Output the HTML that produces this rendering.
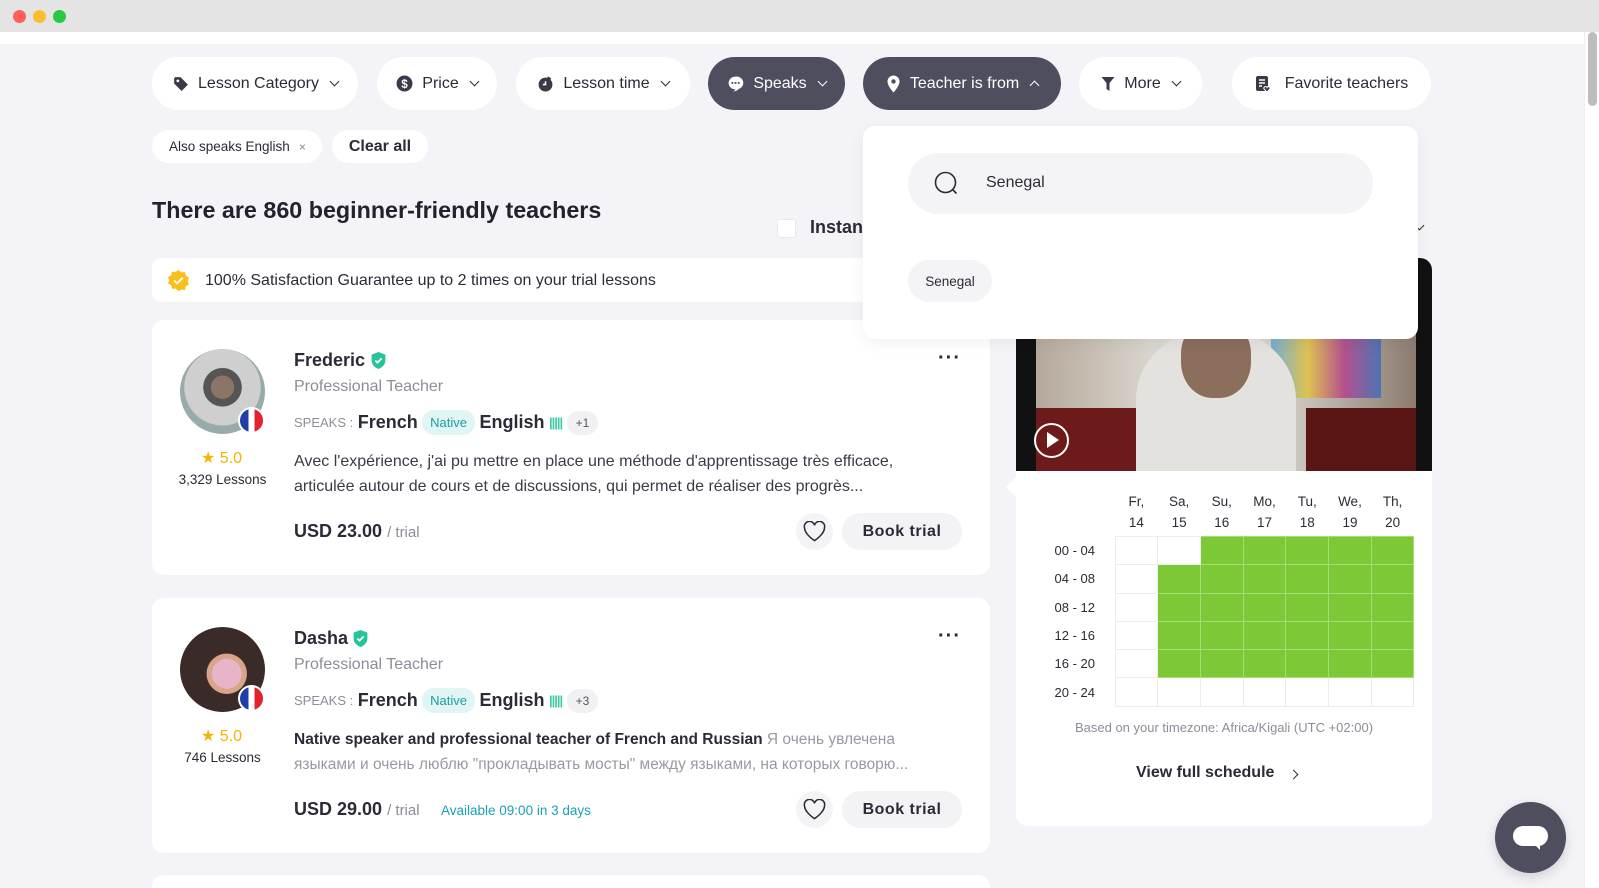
<!DOCTYPE html>
<html style="width:1599px;height:888px;overflow:hidden"><head><meta charset="utf-8"><style>
*{box-sizing:border-box;margin:0;padding:0}
body{width:1599px;height:888px;overflow:hidden;background:#f4f4f8;font-family:"Liberation Sans",Arial,sans-serif;color:#2b2b38;position:relative}
.a{position:absolute}
.pill{position:absolute;top:57px;height:53px;border-radius:27px;background:#fff;display:flex;align-items:center;justify-content:center;gap:9px;font-size:16px;color:#2b2b38}
.pill.dark{background:#4f4e5f;color:#fff}
.chev{width:7px;height:7px;border-right:1.7px solid currentColor;border-bottom:1.7px solid currentColor;transform:rotate(45deg);margin-top:-4px;margin-left:3px}
.chev.up{transform:rotate(-135deg);margin-top:4px}
.card{position:absolute;left:152px;width:838px;height:255px;background:#fff;border-radius:12px}
.name{font-size:18px;font-weight:bold}
.sub{font-size:16px;color:#8e8c99}
.gray{color:#8e8c99}
.badge{display:inline-block;background:#e1f6f4;color:#1a9fa0;font-size:13px;padding:5px 8px;border-radius:12px;vertical-align:middle}
.plus{display:inline-block;background:#f1f1f4;font-size:12px;padding:5px 9px;border-radius:12px;vertical-align:middle;color:#555}
.bars{display:inline-block;vertical-align:middle;color:#3fc9a5;font-size:13px;letter-spacing:-1px;font-weight:bold}
.book{position:absolute;width:120px;height:37px;border-radius:19px;background:#f3f3f6;font-weight:bold;font-size:16px;display:flex;align-items:center;justify-content:center;letter-spacing:.5px}
.grid td{border:1px solid #ececef;width:42.7px;height:28.3px;padding:0}
.grid td.g{background:#7dc837;border-color:#a6dc74}
.grid td.l{width:80px;font-size:13px;text-align:center;border-left:0;border-top:0;border-bottom:0}
</style></head><body>
<div class="a" style="left:0;top:0;width:1599px;height:32px;background:#e4e4e4"></div>
<div class="a" style="left:13px;top:10px;width:13px;height:13px;border-radius:50%;background:#fe5f57"></div>
<div class="a" style="left:33px;top:10px;width:13px;height:13px;border-radius:50%;background:#febc2e"></div>
<div class="a" style="left:53px;top:10px;width:13px;height:13px;border-radius:50%;background:#28c840"></div>
<div class="a" style="left:0;top:32px;width:1584px;height:12px;background:#fff"></div>
<div class="a" style="left:1584px;top:32px;width:15px;height:856px;background:#fff;border-left:1px solid #eee"></div>
<div class="a" style="left:1588px;top:32px;width:9px;height:74px;border-radius:5px;background:#bdbdbd"></div>

<div class="pill" style="left:152px;width:206px"><svg width="17" height="17" viewBox="0 0 16 16"><path d="M2 3v5l7 7 6-6-7-7H3z" fill="#3a3a48"/><circle cx="5.5" cy="5.5" r="1.3" fill="#fff"/></svg>Lesson Category<span class="chev"></span></div>
<div class="pill" style="left:377px;width:120px"><svg width="17" height="17" viewBox="0 0 16 16"><circle cx="8" cy="8" r="7.5" fill="#3a3a48"/><text x="8" y="12" font-size="11" fill="#fff" text-anchor="middle" font-family="Liberation Sans" font-weight="bold">$</text></svg>Price<span class="chev"></span></div>
<div class="pill" style="left:516px;width:174px"><svg width="17" height="17" viewBox="0 0 16 16"><circle cx="8" cy="9" r="6.5" fill="#3a3a48"/><path d="M10 2l3 2" stroke="#3a3a48" stroke-width="1.6"/><path d="M8 6v3H5.5" stroke="#fff" stroke-width="1.5" fill="none"/></svg>Lesson time<span class="chev"></span></div>
<div class="pill dark" style="left:708px;width:137px"><svg width="17" height="17" viewBox="0 0 16 16"><path d="M8 1.5a6.5 6 0 1 0 0 12c-.5 1 -1.5 1.7-2.5 2 2.5 0 4.5-1 5.5-2.4A6.5 6 0 0 0 8 1.5z" fill="#fff"/><circle cx="5" cy="7.5" r="1" fill="#4f4e5f"/><circle cx="8" cy="7.5" r="1" fill="#4f4e5f"/><circle cx="11" cy="7.5" r="1" fill="#4f4e5f"/></svg>Speaks<span class="chev"></span></div>
<div class="pill dark" style="left:863px;width:198px"><svg width="15" height="18" viewBox="0 0 14 18"><path d="M7 0.5a6 6 0 0 0-6 6c0 4.5 6 11 6 11s6-6.5 6-11a6 6 0 0 0-6-6z" fill="#fff"/><circle cx="7" cy="6.5" r="2.2" fill="#4f4e5f"/></svg>Teacher is from<span class="chev up"></span></div>
<div class="pill" style="left:1079px;width:123px"><svg width="14" height="16" viewBox="0 0 14 16"><path d="M0.5 1h13L8.5 7v8l-3-2V7z" fill="#3a3a48"/></svg>More<span class="chev"></span></div>
<div class="pill" style="left:1232px;width:199px;gap:14px"><svg width="16" height="18" viewBox="0 0 16 18"><rect x="1" y="1" width="12" height="15" rx="2" fill="#3a3a48"/><path d="M4 5h6M4 8h6M4 11h3" stroke="#fff" stroke-width="1.4"/><path d="M12 17l-3-3a1.6 1.6 0 0 1 3-1.5a1.6 1.6 0 0 1 3 1.5z" fill="#3a3a48" stroke="#fff" stroke-width="1"/></svg>Favorite teachers</div>

<div class="a" style="left:152px;top:130px;width:170px;height:33px;border-radius:17px;background:#fff;font-size:13.5px;display:flex;align-items:center;padding-left:17px;color:#2b2b38">Also speaks English <span style="color:#888;margin-left:9px;font-size:12px">×</span></div>
<div class="a" style="left:332px;top:130px;width:96px;height:33px;border-radius:17px;background:#fff;font-size:16px;font-weight:bold;display:flex;align-items:center;justify-content:center">Clear all</div>

<div class="a" style="left:152px;top:197px;font-size:23.3px;font-weight:bold;color:#22222e">There are 860 beginner-friendly teachers</div>
<div class="a" style="left:777px;top:219px;width:19px;height:19px;border-radius:3px;background:#fff;border:1px solid #e8e8ee"></div>
<div class="a" style="left:810px;top:217px;font-size:18px;font-weight:bold">Instant</div>
<div class="a" style="left:1416px;top:222px;width:7px;height:7px;border-right:1.5px solid #333;border-bottom:1.5px solid #333;transform:rotate(45deg)"></div>

<div class="a" style="left:152px;top:258px;width:850px;height:44px;background:#fff;border-radius:10px"></div>
<svg class="a" style="left:167px;top:269px" width="23" height="23" viewBox="0 0 24 24"><path d="M12 1l3 2.5 3.8-.3.8 3.8 3.4 2-1.5 3.5 1.5 3.5-3.4 2-.8 3.8-3.8-.3L12 23l-3-2.5-3.8.3-.8-3.8-3.4-2L2.5 12 1 8.5l3.4-2 .8-3.8 3.8.3z" fill="#fbbf1a"/><path d="M7.5 12l3 3 6-6" stroke="#fff" stroke-width="2" fill="none"/></svg>
<div class="a" style="left:205px;top:272px;font-size:16px">100% Satisfaction Guarantee up to 2 times on your trial lessons</div>

<div class="card" style="top:320px"></div>
<div class="a" style="left:180px;top:349px;width:85px;height:85px;border-radius:50%;background:radial-gradient(circle at 50% 45%,#8a7566 0 18%,#555 19% 30%,#cfcfcf 31% 60%,#9aa 61%)"></div>
<div class="a" style="left:238px;top:407px;width:27px;height:27px;border-radius:50%;border:2px solid #fff;background:linear-gradient(90deg,#1f3ea8 0 36%,#fff 36% 64%,#e4222f 64%)"></div>
<div class="a" style="left:201px;top:448px;font-size:16px;color:#f5b400">★ <span>5.0</span></div>
<div class="a" style="left:178px;top:472px;width:89px;text-align:center;font-size:13.5px">3,329 Lessons</div>
<div class="a name" style="left:294px;top:350px">Frederic</div>
<svg class="a" style="left:371px;top:352px" width="15" height="17" viewBox="0 0 14 16"><path d="M7 0l6.5 2.5V8c0 4-3 6.5-6.5 8C3.5 14.5.5 12 .5 8V2.5z" fill="#27c49a"/><path d="M4 8l2 2 4-4" stroke="#fff" stroke-width="1.6" fill="none"/></svg>
<div class="a sub" style="left:294px;top:378px">Professional Teacher</div>
<div class="a" style="left:294px;top:410px;white-space:nowrap"><span class="gray" style="font-size:13px;vertical-align:middle">SPEAKS :</span> <span style="font-size:18px;font-weight:bold;vertical-align:middle">French</span> <span class="badge">Native</span> <span style="font-size:18px;font-weight:bold;vertical-align:middle">English</span> <span class="bars">|||||</span> <span class="plus">+1</span></div>
<div class="a" style="left:294px;top:449px;width:690px;font-size:16px;line-height:25px;color:#3a3a48;white-space:nowrap">Avec l'expérience, j'ai pu mettre en place une méthode d'apprentissage très efficace,<br>articulée autour de cours et de discussions, qui permet de réaliser des progrès...</div>
<div class="a" style="left:294px;top:521px;font-size:18px;font-weight:bold">USD 23.00 <span style="font-weight:normal;font-size:15px;color:#8e8c99">/ trial</span></div>
<div class="a" style="left:796px;top:513px;width:37px;height:37px;border-radius:50%;background:#f4f4f7"></div>
<svg class="a" style="left:803px;top:521px" width="23" height="21" viewBox="0 0 24 22"><path d="M12 20.5S1.5 14 1.5 7A5.2 5.2 0 0 1 12 4.5 5.2 5.2 0 0 1 22.5 7c0 7-10.5 13.5-10.5 13.5z" fill="none" stroke="#2b2b38" stroke-width="1.6"/></svg>
<div class="book" style="left:842px;top:513px">Book trial</div>
<div class="a" style="left:938px;top:347px;font-size:20px;font-weight:bold;letter-spacing:1px">···</div>

<div class="card" style="top:598px"></div>
<div class="a" style="left:180px;top:627px;width:85px;height:85px;border-radius:50%;background:radial-gradient(ellipse at 55% 55%,#e8b4c8 0 22%,#d9a58a 23% 30%,#3a2a28 31%)"></div>
<div class="a" style="left:238px;top:685px;width:27px;height:27px;border-radius:50%;border:2px solid #fff;background:linear-gradient(90deg,#1f3ea8 0 36%,#fff 36% 64%,#e4222f 64%)"></div>
<div class="a" style="left:201px;top:726px;font-size:16px;color:#f5b400">★ <span>5.0</span></div>
<div class="a" style="left:178px;top:750px;width:89px;text-align:center;font-size:13.5px">746 Lessons</div>
<div class="a name" style="left:294px;top:628px">Dasha</div>
<svg class="a" style="left:353px;top:630px" width="15" height="17" viewBox="0 0 14 16"><path d="M7 0l6.5 2.5V8c0 4-3 6.5-6.5 8C3.5 14.5.5 12 .5 8V2.5z" fill="#27c49a"/><path d="M4 8l2 2 4-4" stroke="#fff" stroke-width="1.6" fill="none"/></svg>
<div class="a sub" style="left:294px;top:656px">Professional Teacher</div>
<div class="a" style="left:294px;top:688px;white-space:nowrap"><span class="gray" style="font-size:13px;vertical-align:middle">SPEAKS :</span> <span style="font-size:18px;font-weight:bold;vertical-align:middle">French</span> <span class="badge">Native</span> <span style="font-size:18px;font-weight:bold;vertical-align:middle">English</span> <span class="bars">|||||</span> <span class="plus">+3</span></div>
<div class="a" style="left:294px;top:727px;width:690px;font-size:15.5px;line-height:25px;color:#9a98a4;white-space:nowrap;overflow:hidden"><b style="color:#2b2b38">Native speaker and professional teacher of French and Russian</b> Я очень увлечена<br>языками и очень люблю "прокладывать мосты" между языками, на которых говорю...</div>
<div class="a" style="left:294px;top:799px;font-size:18px;font-weight:bold">USD 29.00 <span style="font-weight:normal;font-size:15px;color:#8e8c99">/ trial</span></div>
<div class="a" style="left:441px;top:803px;font-size:13.5px;color:#1aa0b5">Available 09:00 in 3 days</div>
<div class="a" style="left:796px;top:791px;width:37px;height:37px;border-radius:50%;background:#f4f4f7"></div>
<svg class="a" style="left:803px;top:799px" width="23" height="21" viewBox="0 0 24 22"><path d="M12 20.5S1.5 14 1.5 7A5.2 5.2 0 0 1 12 4.5 5.2 5.2 0 0 1 22.5 7c0 7-10.5 13.5-10.5 13.5z" fill="none" stroke="#2b2b38" stroke-width="1.6"/></svg>
<div class="book" style="left:842px;top:791px">Book trial</div>
<div class="a" style="left:938px;top:625px;font-size:20px;font-weight:bold;letter-spacing:1px">···</div>

<div class="card" style="top:875px;height:13px;border-radius:12px 12px 0 0"></div>

<div class="a" style="left:1016px;top:258px;width:416px;height:568px;background:#fff;border-radius:12px"></div>
<div class="a" style="left:1016px;top:258px;width:416px;height:213px;background:#111;border-radius:12px 12px 0 0;overflow:hidden">
 <div class="a" style="left:20px;top:60px;width:380px;height:153px;background:linear-gradient(90deg,#b4a89a 0,#d9d5cc 30%,#e6e3de 50%,#c9c4bb 70%,#8d7b6f 100%)"></div>
 <div class="a" style="left:20px;top:150px;width:100px;height:63px;background:#6d1a1a"></div>
 <div class="a" style="left:290px;top:150px;width:110px;height:63px;background:#5a1515"></div>
 <div class="a" style="left:255px;top:80px;width:110px;height:60px;background:linear-gradient(90deg,#5aa6d8,#e6c23a,#b43b8a,#3a6cc0);opacity:.8"></div>
 <div class="a" style="left:120px;top:70px;width:160px;height:143px;border-radius:50% 50% 0 0;background:#e4e2de"></div>
 <div class="a" style="left:165px;top:60px;width:70px;height:80px;border-radius:45%;background:#8b6e5c"></div>
</div>
<div class="a" style="left:1034px;top:423px;width:35px;height:35px;border-radius:50%;border:2.5px solid #fff"></div>
<div class="a" style="left:1047px;top:432px;width:0;height:0;border-left:12px solid #fff;border-top:8px solid transparent;border-bottom:8px solid transparent"></div>
<div class="a" style="left:1006px;top:477px;width:0;height:0;border-right:10px solid #fff;border-top:10px solid transparent;border-bottom:10px solid transparent"></div>

<div class="a" style="left:1115px;top:491px;width:299px;display:flex;font-size:13.5px;text-align:center;line-height:21px">
<div style="flex:1">Fr,<br>14</div><div style="flex:1">Sa,<br>15</div><div style="flex:1">Su,<br>16</div><div style="flex:1">Mo,<br>17</div><div style="flex:1">Tu,<br>18</div><div style="flex:1">We,<br>19</div><div style="flex:1">Th,<br>20</div></div>
<table class="a grid" style="left:1035px;top:536px;border-collapse:collapse">
<tr><td class="l">00 - 04</td><td></td><td></td><td class="g"></td><td class="g"></td><td class="g"></td><td class="g"></td><td class="g"></td></tr>
<tr><td class="l">04 - 08</td><td></td><td class="g"></td><td class="g"></td><td class="g"></td><td class="g"></td><td class="g"></td><td class="g"></td></tr>
<tr><td class="l">08 - 12</td><td></td><td class="g"></td><td class="g"></td><td class="g"></td><td class="g"></td><td class="g"></td><td class="g"></td></tr>
<tr><td class="l">12 - 16</td><td></td><td class="g"></td><td class="g"></td><td class="g"></td><td class="g"></td><td class="g"></td><td class="g"></td></tr>
<tr><td class="l">16 - 20</td><td></td><td class="g"></td><td class="g"></td><td class="g"></td><td class="g"></td><td class="g"></td><td class="g"></td></tr>
<tr><td class="l">20 - 24</td><td></td><td></td><td></td><td></td><td></td><td></td><td></td></tr>
</table>
<div class="a" style="left:1016px;top:720px;width:416px;text-align:center;font-size:13px;color:#8e8c99">Based on your timezone: Africa/Kigali (UTC +02:00)</div>
<div class="a" style="left:1136px;top:764px;font-size:16px;font-weight:bold">View full schedule</div>
<div class="a" style="left:1290px;top:771px;width:7px;height:7px;border-right:1.7px solid #333;border-top:1.7px solid #333;transform:rotate(45deg)"></div>

<div class="a" style="left:863px;top:126px;width:555px;height:213px;background:#fff;border-radius:12px;box-shadow:0 4px 16px rgba(0,0,0,.06)"></div>
<div class="a" style="left:908px;top:153px;width:465px;height:61px;border-radius:31px;background:#f4f4f7"></div>
<svg class="a" style="left:934px;top:171px" width="26" height="26" viewBox="0 0 26 26"><circle cx="11.5" cy="11.5" r="10" fill="none" stroke="#2b2b38" stroke-width="1.6"/><path d="M18.5 18.5l4 4" stroke="#2b2b38" stroke-width="1.6"/></svg>
<div class="a" style="left:986px;top:174px;font-size:16px">Senegal</div>
<div class="a" style="left:908px;top:260px;width:84px;height:42px;border-radius:21px;background:#f4f4f7;font-size:13.5px;display:flex;align-items:center;justify-content:center">Senegal</div>

<div class="a" style="left:1495px;top:802px;width:71px;height:71px;border-radius:50%;background:#4f4e5f;box-shadow:0 4px 12px rgba(0,0,0,.15)"></div>
<div class="a" style="left:1513px;top:826px;width:35px;height:20px;border-radius:10px;background:#fff"></div>
<div class="a" style="left:1534px;top:844px;width:0;height:0;border-top:6px solid #fff;border-left:6px solid transparent"></div>
</body></html>
